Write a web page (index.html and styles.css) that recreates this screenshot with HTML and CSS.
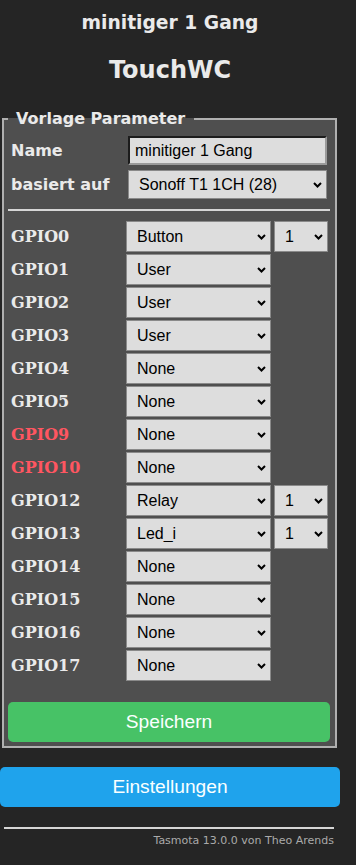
FILE: index.html
```html
<!DOCTYPE html>
<html lang="de">
<head>
    <meta charset="UTF-8">
    <meta name="viewport" content="width=device-width, initial-scale=1.0">
    <title>TouchWC - Vorlage</title>
    <link rel="stylesheet" href="styles.css">
</head>
<body>
    <div class="page">
        <h3>minitiger 1 Gang</h3>
        <h2>TouchWC</h2>

        <fieldset class="box">
            <legend>Vorlage Parameter</legend>
            <div class="params">
                <label class="lbl" for="s1">Name</label>
                <input id="s1" class="txt" type="text" value="minitiger 1 Gang">
                <label class="lbl" for="g99">basiert auf</label>
                <select id="g99" class="sel wide">
                    <option>Sonoff T1 1CH (28)</option>
                </select>
            </div>

            <hr class="sep">

            <div class="gpio">
                <b class="pin">GPIO0</b>
                <select class="sel"><option>Button</option></select>
                <select class="sel"><option>1</option></select>

                <b class="pin">GPIO1</b>
                <select class="sel"><option>User</option></select>
                <span></span>

                <b class="pin">GPIO2</b>
                <select class="sel"><option>User</option></select>
                <span></span>

                <b class="pin">GPIO3</b>
                <select class="sel"><option>User</option></select>
                <span></span>

                <b class="pin">GPIO4</b>
                <select class="sel"><option>None</option></select>
                <span></span>

                <b class="pin">GPIO5</b>
                <select class="sel"><option>None</option></select>
                <span></span>

                <b class="pin warn">GPIO9</b>
                <select class="sel"><option>None</option></select>
                <span></span>

                <b class="pin warn">GPIO10</b>
                <select class="sel"><option>None</option></select>
                <span></span>

                <b class="pin">GPIO12</b>
                <select class="sel"><option>Relay</option></select>
                <select class="sel"><option>1</option></select>

                <b class="pin">GPIO13</b>
                <select class="sel"><option>Led_i</option></select>
                <select class="sel"><option>1</option></select>

                <b class="pin">GPIO14</b>
                <select class="sel"><option>None</option></select>
                <span></span>

                <b class="pin">GPIO15</b>
                <select class="sel"><option>None</option></select>
                <span></span>

                <b class="pin">GPIO16</b>
                <select class="sel"><option>None</option></select>
                <span></span>

                <b class="pin">GPIO17</b>
                <select class="sel"><option>None</option></select>
                <span></span>
            </div>

            <button class="btn save">Speichern</button>
        </fieldset>

        <button class="btn main">Einstellungen</button>

        <div class="foot">
            <hr>
            <a href="#">Tasmota 13.0.0 von Theo Arends</a>
        </div>
    </div>
</body>
</html>
```

FILE: styles.css
```css
body {
    margin: 0;
    background: #252525;
    font-family: "DejaVu Sans", Verdana, sans-serif;
    color: #eaeaea;
}
.page {
    width: 340px;
}
h3 {
    margin: 12px 0 0;
    font-size: 18.72px;
    line-height: 22px;
    text-align: center;
}
h2 {
    margin: 22px 0 0;
    font-size: 24px;
    line-height: 28px;
    text-align: center;
}
.box {
    box-sizing: border-box;
    width: 335px;
    margin: 25px 0 0 2px;
    padding: 0 4px 4px;
    border: 2px solid #b0b0b0;
    background: #4f4f4f;
}
.box legend {
    padding: 0 9px 0 8px;
    font-weight: bold;
    font-size: 16px;
}
.params {
    display: grid;
    grid-template-columns: 120px 199px;
    row-gap: 5px;
    margin-top: 8px;
    align-items: center;
}
.lbl {
    padding-left: 3px;
    font-weight: bold;
    font-size: 16px;
}
.txt, .sel {
    box-sizing: border-box;
    margin: 0;
    font-family: "Liberation Sans", Arial, sans-serif;
    font-size: 16px;
    color: #000;
    background-color: #dddddd;
}
.txt {
    height: 29px;
    padding: 0 5px;
    border: 2px solid;
    border-color: #1c1c1c #9a9a9a #9a9a9a #1c1c1c;
}
.sel {
    -webkit-appearance: none;
    appearance: none;
    height: 31px;
    padding: 0 18px 0 10px;
    border: 1px solid #8a8a8a;
    border-radius: 0;
    background-image: url("data:image/svg+xml,%3Csvg xmlns='http://www.w3.org/2000/svg' width='9' height='6' viewBox='0 0 9 6'%3E%3Cpath d='M1 1l3.5 3.5 3.5-3.5' fill='none' stroke='%23000' stroke-width='2'/%3E%3C/svg%3E");
    background-repeat: no-repeat;
    background-position: right 4px center;
    background-size: 9px 6px;
}
.sel.wide {
    height: 29px;
}
.sep {
    margin: 10px 1px 10px 0;
    height: 0;
    border: 0;
    border-top: 2px solid #d6d6d6;
}
.gpio {
    display: grid;
    grid-template-columns: 115px 145px 54px;
    column-gap: 3px;
    row-gap: 2px;
    align-items: center;
}
.pin {
    padding-left: 3px;
    font-family: "DejaVu Serif", Georgia, serif;
    font-size: 16px;
}
.warn {
    color: #ff5661;
}
.btn {
    display: block;
    height: 40px;
    border: 0;
    border-radius: 5px;
    color: #faffff;
    font-family: "Liberation Sans", Arial, sans-serif;
    font-size: 19.2px;
    cursor: pointer;
}
.save {
    width: 322px;
    margin-top: 21px;
    background: #47c266;
}
.main {
    width: 340px;
    margin-top: 19px;
    background: #1fa3ec;
}
.foot {
    margin: 0 6px 0 4px;
    text-align: right;
    font-size: 11px;
}
.foot hr {
    margin: 20px 0 5px;
    height: 0;
    border: 0;
    border-top: 2px solid #d6d6d6;
}
.foot a {
    color: #aaa;
    text-decoration: none;
}
```
